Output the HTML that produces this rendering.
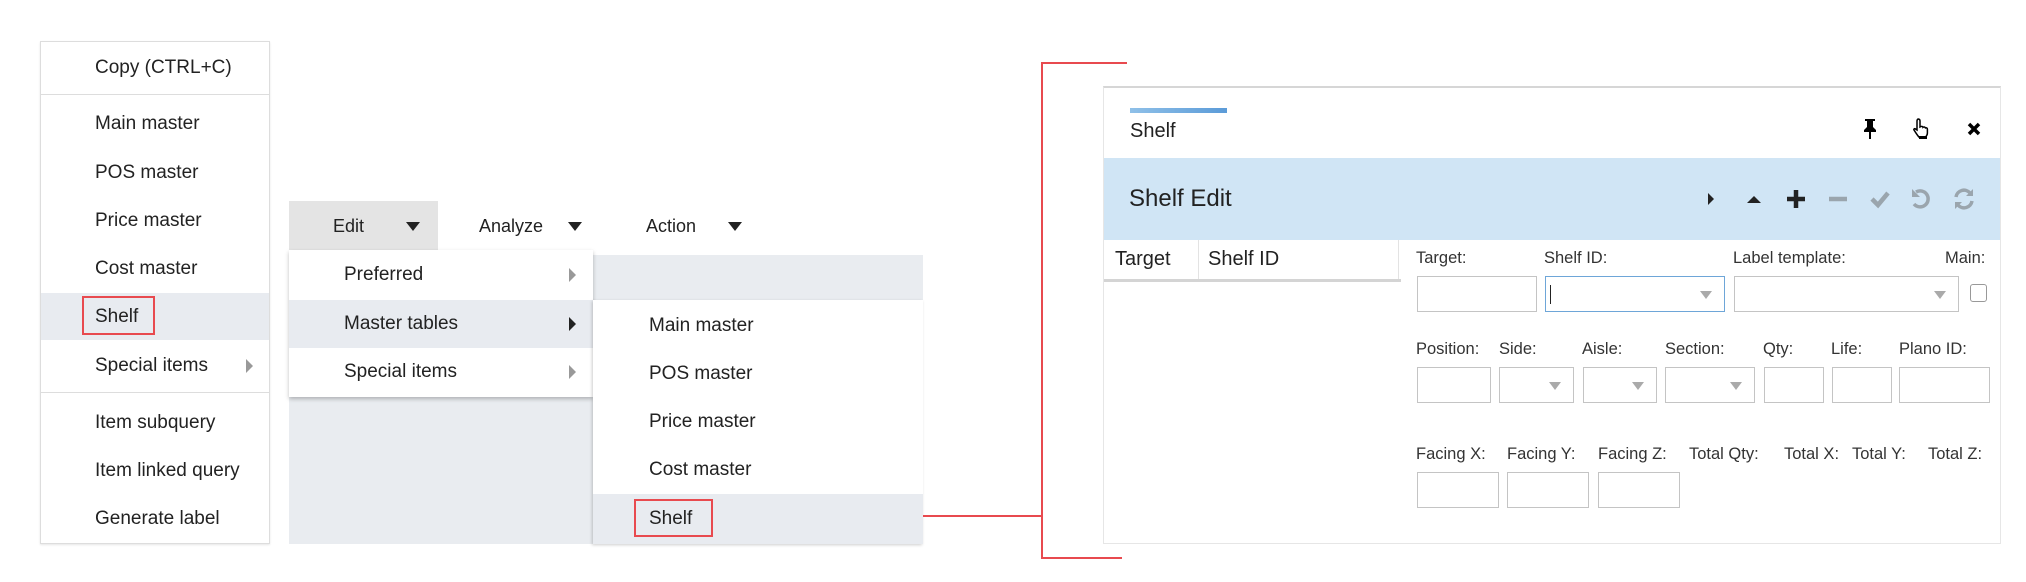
<!DOCTYPE html>
<html><head><meta charset="utf-8"><style>
*{margin:0;padding:0;box-sizing:border-box}
body{width:2026px;height:582px;background:#fff;position:relative;overflow:hidden;font-family:"Liberation Sans",sans-serif;color:#222}
.a{position:absolute}
.t{position:absolute;font-size:19px;line-height:22px;white-space:nowrap}
.l{position:absolute;font-size:16.5px;line-height:20px;color:#333;white-space:nowrap}
.in{position:absolute;border:1px solid #c4c4c4;background:#fff;height:36px}
.dd::after{content:"";position:absolute;right:12px;top:14px;border-left:6px solid transparent;border-right:6px solid transparent;border-top:8px solid #aaa}
.ra{position:absolute;width:0;height:0;border-top:7px solid transparent;border-bottom:7px solid transparent;border-left:7px solid #999}
.da{position:absolute;width:0;height:0;border-left:7px solid transparent;border-right:7px solid transparent;border-top:9px solid #222}
</style></head><body>
<!-- left menu -->
<div class="a" style="left:40px;top:41px;width:230px;height:503px;border:1px solid #ddd;background:#fff;box-shadow:0 1px 2px rgba(0,0,0,.1)"></div>
<div class="a" style="left:41px;top:94px;width:228px;height:1px;background:#ddd"></div>
<div class="a" style="left:41px;top:392px;width:228px;height:1px;background:#ddd"></div>
<div class="a" style="left:41px;top:293px;width:228px;height:47px;background:#e8ebf0"></div>
<div class="t" style="left:95px;top:57px">Copy (CTRL+C)</div>
<div class="t" style="left:95px;top:113px">Main master</div>
<div class="t" style="left:95px;top:162px">POS master</div>
<div class="t" style="left:95px;top:210px">Price master</div>
<div class="t" style="left:95px;top:258px">Cost master</div>
<div class="t" style="left:95px;top:306px">Shelf</div>
<div class="a" style="left:82px;top:296px;width:73px;height:39px;border:2px solid #e84a4f"></div>
<div class="t" style="left:95px;top:355px">Special items</div>
<div class="ra" style="left:246px;top:359px"></div>
<div class="t" style="left:95px;top:412px">Item subquery</div>
<div class="t" style="left:95px;top:460px">Item linked query</div>
<div class="t" style="left:95px;top:508px">Generate label</div>

<!-- toolbar -->
<div class="a" style="left:289px;top:201px;width:149px;height:49px;background:#e4e4e4"></div>
<div class="t" style="left:333px;top:215px;font-size:18px">Edit</div>
<div class="da" style="left:406px;top:222px"></div>
<div class="t" style="left:479px;top:215px;font-size:18px">Analyze</div>
<div class="da" style="left:568px;top:222px"></div>
<div class="t" style="left:646px;top:215px;font-size:18px">Action</div>
<div class="da" style="left:728px;top:222px"></div>
<div class="a" style="left:289px;top:250px;width:634px;height:294px;background:#e9ecf0"></div>
<div class="a" style="left:593px;top:250px;width:330px;height:5px;background:#fff"></div>
<!-- dropdown 1 -->
<div class="a" style="left:289px;top:250px;width:304px;height:147px;background:#fff;box-shadow:0 2px 4px rgba(0,0,0,.25)"></div>
<div class="a" style="left:289px;top:300px;width:304px;height:48px;background:#e8ebf0"></div>
<div class="t" style="left:344px;top:264px">Preferred</div>
<div class="ra" style="left:569px;top:268px"></div>
<div class="t" style="left:344px;top:313px">Master tables</div>
<div class="ra" style="left:569px;top:317px;border-left-color:#222"></div>
<div class="t" style="left:344px;top:361px">Special items</div>
<div class="ra" style="left:569px;top:365px"></div>
<!-- dropdown 2 -->
<div class="a" style="left:593px;top:300px;width:330px;height:244px;background:#fff;box-shadow:-1px 1px 3px rgba(0,0,0,.2)"></div>
<div class="a" style="left:593px;top:494px;width:330px;height:50px;background:#e8ebf0"></div>
<div class="t" style="left:649px;top:315px">Main master</div>
<div class="t" style="left:649px;top:363px">POS master</div>
<div class="t" style="left:649px;top:411px">Price master</div>
<div class="t" style="left:649px;top:459px">Cost master</div>
<div class="t" style="left:649px;top:508px">Shelf</div>
<div class="a" style="left:634px;top:499px;width:79px;height:38px;border:2px solid #e84a4f"></div>

<!-- red connector -->
<div class="a" style="left:923px;top:515px;width:120px;height:2px;background:#e84a4f"></div>
<div class="a" style="left:1041px;top:62px;width:2px;height:497px;background:#e84a4f"></div>
<div class="a" style="left:1041px;top:62px;width:86px;height:2px;background:#e84a4f"></div>
<div class="a" style="left:1041px;top:557px;width:81px;height:2px;background:#e84a4f"></div>

<!-- panel -->
<div class="a" style="left:1103px;top:86px;width:898px;height:458px;border:1px solid #e6e6e6;border-top:2px solid #d6d6d6"></div>
<div class="a" style="left:1130px;top:108px;width:97px;height:5px;background:linear-gradient(90deg,#8fc0e8,#5b9bd8)"></div>
<div class="t" style="left:1130px;top:120px;font-size:20px">Shelf</div>
<svg class="a" style="left:1860px;top:118px" width="20" height="22" viewBox="0 0 20 22"><path d="M5 1h10v2h-2v6l3 3v2H4v-2l3-3V3H5z" fill="#000"/><path d="M10 14v7" stroke="#000" stroke-width="2"/></svg>
<svg class="a" style="left:1911px;top:117px" width="22" height="24" viewBox="0 0 22 24"><path d="M7 2c1.2 0 2 .8 2 2v6l1-.5c1-.5 2 .2 2 .8.8-.6 2-.3 2.4.6.8-.4 2 .1 2 1.2v4c0 2-1 3-2 4H8c-1-1-2-2.5-3-4L3 13c-.5-.8.6-1.8 1.5-1L6 13V4c0-1.2.8-2 1-2z" fill="#fff" stroke="#000" stroke-width="1.5"/><rect x="8" y="19" width="8" height="3" fill="#000"/></svg>
<svg class="a" style="left:1966px;top:121px" width="16" height="16" viewBox="0 0 16 16"><path d="M3 3l10 10M13 3L3 13" stroke="#000" stroke-width="3.5"/></svg>

<div class="a" style="left:1104px;top:158px;width:896px;height:82px;background:#d0e5f5"></div>
<div class="t" style="left:1129px;top:185px;font-size:24px;line-height:28px">Shelf Edit</div>
<svg class="a" style="left:1700px;top:186px" width="290" height="26" viewBox="0 0 290 26">
<path d="M8 7l6 6-6 6z" fill="#222"/>
<path d="M47 17l7-7 7 7z" fill="#222"/>
<path d="M96 4v18M87 13h18" stroke="#222" stroke-width="4.5"/>
<path d="M129 13h18" stroke="#9aa5ad" stroke-width="4.5"/>
<path d="M172 13l6 6 10-12" stroke="#9aa5ad" stroke-width="4.5" fill="none"/>
<path d="M216 6a8 8 0 1 1-2 12" stroke="#9aa5ad" stroke-width="3.5" fill="none"/><path d="M212 3v8h8z" fill="#9aa5ad"/>
<path d="M256 11a8 8 0 0 1 14-4M272 15a8 8 0 0 1-14 4" stroke="#9aa5ad" stroke-width="3.5" fill="none"/><path d="M273 3v7h-7zM255 23v-7h7z" fill="#9aa5ad"/>
</svg>

<!-- grid -->
<div class="a" style="left:1198px;top:240px;width:1px;height:40px;background:#e3e3e3"></div>
<div class="a" style="left:1398px;top:240px;width:1px;height:40px;background:#e3e3e3"></div>
<div class="a" style="left:1104px;top:279px;width:297px;height:3px;background:#d4d4d4"></div>
<div class="t" style="left:1115px;top:248px;font-size:20px">Target</div>
<div class="t" style="left:1208px;top:248px;font-size:20px">Shelf ID</div>

<!-- form -->
<div class="l" style="left:1416px;top:248px">Target:</div>
<div class="l" style="left:1544px;top:248px">Shelf ID:</div>
<div class="l" style="left:1733px;top:248px">Label template:</div>
<div class="l" style="left:1945px;top:248px">Main:</div>
<div class="in" style="left:1417px;top:276px;width:120px"></div>
<div class="in dd" style="left:1545px;top:276px;width:180px;border-color:#6ea6d8"><div class="a" style="left:4px;top:8px;width:1px;height:19px;background:#222"></div></div>
<div class="in dd" style="left:1734px;top:276px;width:225px"></div>
<div class="a" style="left:1970px;top:284px;width:17px;height:18px;border:1px solid #999;border-radius:3px"></div>

<div class="l" style="left:1416px;top:339px">Position:</div>
<div class="l" style="left:1499px;top:339px">Side:</div>
<div class="l" style="left:1582px;top:339px">Aisle:</div>
<div class="l" style="left:1665px;top:339px">Section:</div>
<div class="l" style="left:1763px;top:339px">Qty:</div>
<div class="l" style="left:1831px;top:339px">Life:</div>
<div class="l" style="left:1899px;top:339px">Plano ID:</div>
<div class="in" style="left:1417px;top:367px;width:74px"></div>
<div class="in dd" style="left:1499px;top:367px;width:75px"></div>
<div class="in dd" style="left:1583px;top:367px;width:74px"></div>
<div class="in dd" style="left:1665px;top:367px;width:90px"></div>
<div class="in" style="left:1764px;top:367px;width:60px"></div>
<div class="in" style="left:1832px;top:367px;width:60px"></div>
<div class="in" style="left:1899px;top:367px;width:91px"></div>

<div class="l" style="left:1416px;top:444px">Facing X:</div>
<div class="l" style="left:1507px;top:444px">Facing Y:</div>
<div class="l" style="left:1598px;top:444px">Facing Z:</div>
<div class="l" style="left:1689px;top:444px">Total Qty:</div>
<div class="l" style="left:1784px;top:444px">Total X:</div>
<div class="l" style="left:1852px;top:444px">Total Y:</div>
<div class="l" style="left:1928px;top:444px">Total Z:</div>
<div class="in" style="left:1417px;top:472px;width:82px"></div>
<div class="in" style="left:1507px;top:472px;width:82px"></div>
<div class="in" style="left:1598px;top:472px;width:82px"></div>
</body></html>
